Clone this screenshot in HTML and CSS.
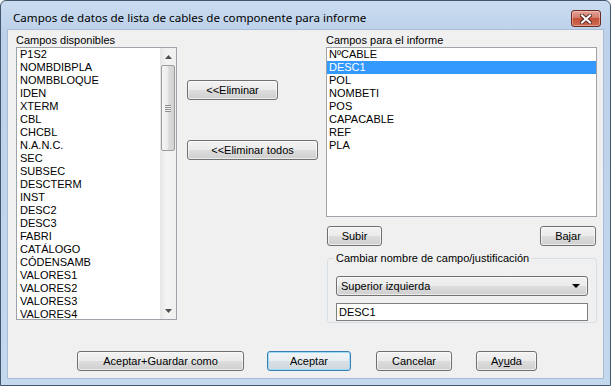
FILE: index.html
```html
<!DOCTYPE html>
<html lang="es">
<head>
    <meta charset="UTF-8">
    <title>Campos de datos de lista de cables de componente para informe</title>
    <link rel="stylesheet" href="styles.css">
</head>
<body>
    <div class="window">
        <div class="titlebar">
            <span class="title">Campos de datos de lista de cables de componente para informe</span>
            <span class="close">
                <svg width="12" height="10" viewBox="0 0 12 10">
                    <path d="M2 1.5 L10 8.5 M10 1.5 L2 8.5" stroke="#5b2720" stroke-width="4" stroke-linecap="square"/>
                    <path d="M2 1.5 L10 8.5 M10 1.5 L2 8.5" stroke="#fff" stroke-width="2" stroke-linecap="square"/>
                </svg>
            </span>
        </div>

        <div class="client">
            <div class="main">
                <div class="col-left">
                    <div class="label">Campos disponibles</div>
                    <div class="listbox avail">
                        <ul class="items">
                            <li>P1S2</li>
                            <li>NOMBDIBPLA</li>
                            <li>NOMBBLOQUE</li>
                            <li>IDEN</li>
                            <li>XTERM</li>
                            <li>CBL</li>
                            <li>CHCBL</li>
                            <li>N.A.N.C.</li>
                            <li>SEC</li>
                            <li>SUBSEC</li>
                            <li>DESCTERM</li>
                            <li>INST</li>
                            <li>DESC2</li>
                            <li>DESC3</li>
                            <li>FABRI</li>
                            <li>CATÁLOGO</li>
                            <li>CÓDENSAMB</li>
                            <li>VALORES1</li>
                            <li>VALORES2</li>
                            <li>VALORES3</li>
                            <li>VALORES4</li>
                        </ul>
                        <div class="vscroll">
                            <div class="arrow-btn">
                                <svg width="7" height="4" viewBox="0 0 7 4"><path d="M0 4 L3.5 0 L7 4 Z" fill="#505050"/></svg>
                            </div>
                            <div class="thumb"><span class="grip"></span></div>
                            <div class="track"></div>
                            <div class="arrow-btn">
                                <svg width="7" height="4" viewBox="0 0 7 4"><path d="M0 0 L3.5 4 L7 0 Z" fill="#505050"/></svg>
                            </div>
                        </div>
                    </div>
                </div>

                <div class="col-mid">
                    <button class="btn btn-remove">&lt;&lt;Eliminar</button>
                    <button class="btn btn-remove-all">&lt;&lt;Eliminar todos</button>
                </div>

                <div class="col-right">
                    <div class="label">Campos para el informe</div>
                    <ul class="listbox report">
                        <li>NºCABLE</li>
                        <li class="selected">DESC1</li>
                        <li>POL</li>
                        <li>NOMBETI</li>
                        <li>POS</li>
                        <li>CAPACABLE</li>
                        <li>REF</li>
                        <li>PLA</li>
                    </ul>
                    <div class="move-row">
                        <button class="btn btn-up">Subir</button>
                        <button class="btn btn-down">Bajar</button>
                    </div>
                    <fieldset class="group">
                        <legend>Cambiar nombre de campo/justificación</legend>
                        <div class="combo">
                            <span>Superior izquierda</span>
                            <svg width="8" height="4" viewBox="0 0 8 4"><path d="M0 0 L8 0 L4 4 Z" fill="#000"/></svg>
                        </div>
                        <div class="textbox">DESC1</div>
                    </fieldset>
                </div>
            </div>

            <div class="footer">
                <button class="btn btn-save">Aceptar+Guardar como</button>
                <button class="btn btn-ok default">Aceptar</button>
                <button class="btn btn-cancel">Cancelar</button>
                <button class="btn btn-help">Ay<u>u</u>da</button>
            </div>
        </div>
    </div>
</body>
</html>
```

FILE: styles.css
```css
body {
    margin: 0;
    background: #ffffff;
    font-family: "Liberation Sans", Arial, sans-serif;
    font-size: 11px;
    color: #000;
}

.window {
    width: 611px;
    height: 386px;
    box-sizing: border-box;
    border: 1px solid #42566c;
    border-radius: 6px 6px 0 0;
    background: linear-gradient(#cadcf0, #bcd2ea 30px, #c4d8ee);
    padding: 0 7px 7px;
    display: flex;
    flex-direction: column;
}

.titlebar {
    height: 29px;
    display: flex;
    align-items: flex-start;
    justify-content: space-between;
}
.title {
    font-family: "Noto Sans", "Open Sans", sans-serif;
    font-size: 11.6px;
    line-height: 16px;
    margin: 9px 0 0 5px;
}
.close {
    width: 30px;
    height: 17px;
    box-sizing: border-box;
    margin: 9px 2px 0 0;
    border: 1px solid #6b2b22;
    border-radius: 3px;
    background: linear-gradient(#e3a498, #d47b6a 45%, #c5513a 50%, #cb6a52);
    box-shadow: inset 0 0 0 1px rgba(255, 220, 210, .45);
    display: flex;
    align-items: center;
    justify-content: center;
}

.client {
    flex: 1;
    background: #f0f0f0;
    box-shadow: 0 0 0 1px #a9bed6;
    display: flex;
    flex-direction: column;
}

.main {
    display: flex;
    padding: 4px 0 0 8px;
}

.label {
    height: 13px;
    line-height: 13px;
    white-space: nowrap;
}

.listbox {
    border: 1px solid #9ea3aa;
    background: #fff;
    box-sizing: border-box;
    margin: 0;
    padding: 0;
    list-style: none;
    line-height: 13px;
}

/* left column */
.col-left {
    width: 161px;
}
.avail {
    height: 273px;
    display: flex;
    overflow: hidden;
}
.items {
    flex: 1;
    list-style: none;
    margin: 0;
    padding: 0 0 0 3px;
}
.vscroll {
    width: 16px;
    display: flex;
    flex-direction: column;
    background: linear-gradient(to right, #e6e6e6, #f3f3f3 40%, #f0f0f0);
}
.arrow-btn {
    height: 17px;
    display: flex;
    align-items: center;
    justify-content: center;
}
.thumb {
    height: 84px;
    margin: 0 1px;
    border: 1px solid #9c9c9c;
    border-radius: 2px;
    background: linear-gradient(to right, #f6f6f6, #ececec 45%, #dcdcdc 55%, #d2d2d2);
    display: flex;
    align-items: center;
    justify-content: center;
}
.grip {
    width: 6px;
    height: 7px;
    background: repeating-linear-gradient(#8c8c8c 0, #8c8c8c 1px, #f4f4f4 1px, #f4f4f4 2px);
}
.track {
    flex: 1;
}

/* middle buttons */
.col-mid {
    width: 131px;
    margin-left: 10px;
    display: flex;
    flex-direction: column;
    align-items: flex-start;
}
.btn-remove {
    width: 91px;
    margin-top: 46px;
}
.btn-remove-all {
    width: 131px;
    margin-top: 40px;
}

/* right column */
.col-right {
    width: 271px;
    margin-left: 8px;
}
.report {
    width: 271px;
    height: 170px;
    padding-left: 0;
}
.report li {
    padding-left: 2px;
}
.report .selected {
    background: #3399ff;
    color: #fff;
}
.move-row {
    display: flex;
    justify-content: space-between;
    padding: 0 1px;
    margin-top: 9px;
}
.btn-up {
    width: 55px;
}
.btn-down {
    width: 56px;
}

.group {
    margin: 6px 0 0 1px;
    width: 270px;
    box-sizing: border-box;
    border: 1px solid #d5dfe5;
    border-radius: 3px;
    padding: 11px 8px 1px;
}
.group legend {
    padding: 0 2px;
    margin-left: -2px;
    line-height: 13px;
}
.combo {
    height: 20px;
    box-sizing: border-box;
    border: 1px solid #707070;
    border-radius: 3px;
    background: linear-gradient(#f2f2f2, #ebebeb 50%, #dddddd 50%, #cfcfcf);
    box-shadow: inset 0 0 0 1px rgba(255, 255, 255, .6);
    padding: 0 7px 0 4px;
    display: flex;
    align-items: center;
    justify-content: space-between;
}
.textbox {
    height: 18px;
    box-sizing: border-box;
    margin-top: 7px;
    border: 1px solid #7f7f7f;
    background: #fff;
    padding-left: 2px;
    line-height: 16px;
}

/* buttons */
.btn {
    height: 20px;
    box-sizing: border-box;
    border: 1px solid #707070;
    border-radius: 3px;
    background: linear-gradient(#f2f2f2, #ebebeb 50%, #dddddd 50%, #cfcfcf);
    box-shadow: inset 0 0 0 1px rgba(255, 255, 255, .6);
    font-family: "Liberation Sans", Arial, sans-serif;
    font-size: 11px;
    color: #000;
    padding: 0;
    line-height: 17px;
}
.btn.default {
    border-color: #3c7fb1;
    box-shadow: inset 0 0 0 1px #9ddcf8;
    background: linear-gradient(#f0f4f7, #e8eef2 50%, #d9e1e7 50%, #cfd8de);
}

.footer {
    margin-top: auto;
    display: flex;
    padding: 0 0 7px 69px;
}
.btn-save {
    width: 167px;
}
.btn-ok {
    width: 84px;
    margin-left: 23px;
}
.btn-cancel {
    width: 76px;
    margin-left: 25px;
}
.btn-help {
    width: 61px;
    margin-left: 24px;
}
```
